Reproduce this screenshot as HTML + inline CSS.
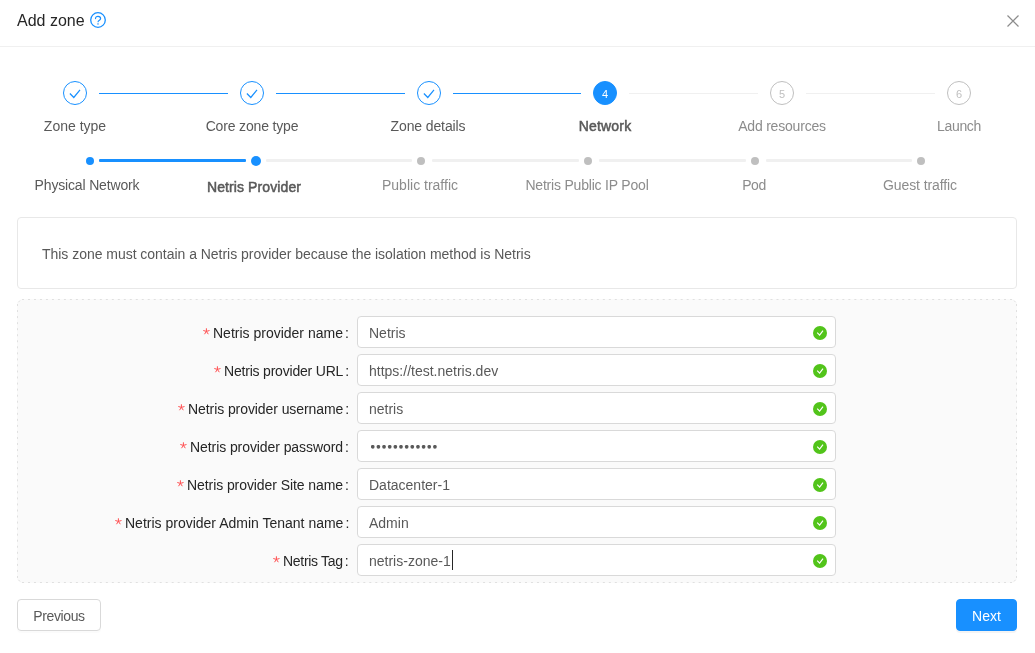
<!DOCTYPE html>
<html>
<head>
<meta charset="utf-8">
<style>
html,body{margin:0;padding:0;width:1035px;height:653px;overflow:hidden;background:#fff;}
body{font-family:"Liberation Sans",sans-serif;font-size:14px;color:#262626;position:relative;}
.a{position:absolute;white-space:nowrap;will-change:transform;}
.title{left:17px;top:10px;font-size:16px;line-height:22px;color:#262626;}
.hdr-line{left:0;top:46px;width:1035px;height:1px;background:#f0f0f0;}
.circ{width:22px;height:22px;border-radius:50%;border:1px solid #1890ff;top:81px;}
.circ.wait{border-color:#bfbfbf;color:#bfbfbf;font-size:11px;line-height:24px;text-align:center;}
.circ.proc{background:#1890ff;color:#fff;font-size:11px;line-height:24px;text-align:center;}
.tail{top:93px;height:1px;background:#1890ff;}
.tail.wait{background:#f0f0f0;}
.st{top:116px;line-height:20px;width:200px;text-align:center;color:#595959;}
.st.wait{color:#8c8c8c;}
.st.proc{color:#595959;font-weight:normal;-webkit-text-stroke:0.5px #595959;letter-spacing:0.2px;}
.dot{width:8px;height:8px;border-radius:50%;background:#1890ff;top:157px;}
.dot.wait{background:#bfbfbf;}
.dot.big{width:10px;height:10px;top:156px;}
.dtail{top:159px;height:3px;background:#1890ff;border-radius:1px;}
.dtail.wait{background:#f0f0f0;}
.sst{top:175px;line-height:20px;width:200px;text-align:center;color:#595959;}
.sst.wait{color:#8c8c8c;}
.sst.proc{font-weight:normal;-webkit-text-stroke:0.5px #595959;top:177px;letter-spacing:0.1px;}
.info{left:17px;top:217px;width:998px;height:70px;border:1px solid #e8e8e8;border-radius:4px;}
.infotext{left:42px;top:244px;line-height:20px;color:#595959;letter-spacing:-0.03px;}
.form{left:17px;top:299px;width:1000px;height:284px;border-radius:6px;background:#fafafa;}
.lbl{right:686px;line-height:20px;color:#262626;}
.lbl .ast{vertical-align:3.2px;margin-right:3px;margin-left:1px;}
.lbl b{font-weight:normal;margin-left:2px;}
.inp{left:357px;width:477px;height:30px;border:1px solid #d9d9d9;border-radius:4px;background:#fff;}
.inp span{position:absolute;left:11px;top:6px;line-height:20px;color:#595959;}
.ok{position:absolute;left:455px;top:9px;width:14px;height:14px;}
.btn{top:599px;height:30px;border:1px solid #d9d9d9;border-radius:4px;background:#fff;color:#595959;text-align:center;line-height:32px;box-shadow:0 2px 0 rgba(0,0,0,.015);}
.btn.primary{background:#1890ff;border-color:#1890ff;color:#fff;box-shadow:0 2px 0 rgba(0,0,0,.045);}
</style>
</head>
<body>
<div class="a title">Add zone</div>
<svg class="a" style="left:90px;top:12px" width="16" height="16" viewBox="0 0 16 16"><circle cx="8" cy="8" r="7.3" fill="none" stroke="#1890ff" stroke-width="1.3"/><path d="M5.5 6.6c0-1.4 1.1-2.3 2.5-2.3s2.6 1 2.6 2.2c0 .9-.6 1.3-1.2 1.7-.7.4-1.3.9-1.3 1.5" fill="none" stroke="#1890ff" stroke-width="1.2" stroke-linecap="round"/><rect x="7.35" y="11.3" width="1.3" height="1.3" fill="#1890ff"/></svg>
<svg class="a" style="left:1007px;top:15px" width="12" height="12" viewBox="0 0 12 12"><path d="M0.5 0.5L11.5 11.5M11.5 0.5L0.5 11.5" stroke="#8c8c8c" stroke-width="1.2"/></svg>
<div class="a hdr-line"></div>

<!-- main steps -->
<div class="a circ" style="left:63px"><svg style="position:absolute;left:-1px;top:-1px" width="24" height="24" viewBox="0 0 24 24"><path d="M6.9 12.5L10.8 16.5L17 8.9" fill="none" stroke="#1890ff" stroke-width="1.2"/></svg></div>
<div class="a tail" style="left:99px;width:129px"></div>
<div class="a circ" style="left:240px"><svg style="position:absolute;left:-1px;top:-1px" width="24" height="24" viewBox="0 0 24 24"><path d="M6.9 12.5L10.8 16.5L17 8.9" fill="none" stroke="#1890ff" stroke-width="1.2"/></svg></div>
<div class="a tail" style="left:276px;width:129px"></div>
<div class="a circ" style="left:417px"><svg style="position:absolute;left:-1px;top:-1px" width="24" height="24" viewBox="0 0 24 24"><path d="M6.9 12.5L10.8 16.5L17 8.9" fill="none" stroke="#1890ff" stroke-width="1.2"/></svg></div>
<div class="a tail" style="left:453px;width:128px"></div>
<div class="a circ proc" style="left:593px">4</div>
<div class="a tail wait" style="left:629px;width:129px"></div>
<div class="a circ wait" style="left:770px">5</div>
<div class="a tail wait" style="left:806px;width:129px"></div>
<div class="a circ wait" style="left:947px">6</div>

<div class="a st" style="left:-25px">Zone type</div>
<div class="a st" style="left:152px;letter-spacing:-0.16px">Core zone type</div>
<div class="a st" style="left:328px;letter-spacing:-0.12px">Zone details</div>
<div class="a st proc" style="left:505px">Network</div>
<div class="a st wait" style="left:682px;letter-spacing:-0.2px">Add resources</div>
<div class="a st wait" style="left:859px;letter-spacing:-0.35px">Launch</div>

<!-- sub steps -->
<div class="a dot" style="left:86px"></div>
<div class="a dtail" style="left:99px;width:147px"></div>
<div class="a dot big" style="left:251px"></div>
<div class="a dtail wait" style="left:266px;width:146px"></div>
<div class="a dot wait" style="left:417px"></div>
<div class="a dtail wait" style="left:432px;width:147px"></div>
<div class="a dot wait" style="left:584px"></div>
<div class="a dtail wait" style="left:599px;width:147px"></div>
<div class="a dot wait" style="left:751px"></div>
<div class="a dtail wait" style="left:766px;width:146px"></div>
<div class="a dot wait" style="left:917px"></div>

<div class="a sst" style="left:-13px;letter-spacing:-0.16px">Physical Network</div>
<div class="a sst proc" style="left:154px">Netris Provider</div>
<div class="a sst wait" style="left:320px">Public traffic</div>
<div class="a sst wait" style="left:487px;letter-spacing:-0.2px">Netris Public IP Pool</div>
<div class="a sst wait" style="left:654px;letter-spacing:-0.5px">Pod</div>
<div class="a sst wait" style="left:820px;letter-spacing:-0.1px">Guest traffic</div>

<div class="a info"></div>
<div class="a infotext">This zone must contain a Netris provider because the isolation method is Netris</div>

<div class="a form"></div>
<svg class="a" style="left:0;top:0" width="1035" height="653" viewBox="0 0 1035 653">
<g fill="none" stroke="#e0e0e0" stroke-width="1">
<line x1="22" y1="299.5" x2="1012" y2="299.5" stroke-dasharray="2 3.988"/>
<line x1="22" y1="582.5" x2="1012" y2="582.5" stroke-dasharray="2 3.988"/>
<line x1="17.5" y1="304" x2="17.5" y2="578" stroke-dasharray="2 4.044"/>
<line x1="1016.5" y1="304" x2="1016.5" y2="578" stroke-dasharray="2 4.044"/>
<path d="M18.3 302.3L20 300.6M18.3 579.7L20 581.4M1015.7 302.3L1014 300.6M1015.7 579.7L1014 581.4"/>
</g></svg>
<div class="a lbl" style="top:323px"><svg class="ast" width="7" height="7" viewBox="0 0 7 7"><path d="M3.4 3.4V0.3M3.4 3.4L0.3 2.5M3.4 3.4L6.5 2.5M3.4 3.4L1.5 6.2M3.4 3.4L5.3 6.2" fill="none" stroke="#ff4d4f" stroke-width="1"/></svg>Netris provider name<b>:</b></div>
<div class="a inp" style="top:316px"><span>Netris</span><svg class="ok" viewBox="0 0 14 14"><circle cx="7" cy="7" r="7" fill="#52c41a"/><path d="M4.2 6.7L6.6 9.1L10 4.6" fill="none" stroke="#fff" stroke-width="1.15"/></svg></div>
<div class="a lbl" style="top:361px"><svg class="ast" width="7" height="7" viewBox="0 0 7 7"><path d="M3.4 3.4V0.3M3.4 3.4L0.3 2.5M3.4 3.4L6.5 2.5M3.4 3.4L1.5 6.2M3.4 3.4L5.3 6.2" fill="none" stroke="#ff4d4f" stroke-width="1"/></svg><span style="letter-spacing:-0.2px">Netris provider URL</span><b>:</b></div>
<div class="a inp" style="top:354px"><span>https://test.netris.dev</span><svg class="ok" viewBox="0 0 14 14"><circle cx="7" cy="7" r="7" fill="#52c41a"/><path d="M4.2 6.7L6.6 9.1L10 4.6" fill="none" stroke="#fff" stroke-width="1.15"/></svg></div>
<div class="a lbl" style="top:399px"><svg class="ast" width="7" height="7" viewBox="0 0 7 7"><path d="M3.4 3.4V0.3M3.4 3.4L0.3 2.5M3.4 3.4L6.5 2.5M3.4 3.4L1.5 6.2M3.4 3.4L5.3 6.2" fill="none" stroke="#ff4d4f" stroke-width="1"/></svg><span style="letter-spacing:-0.08px">Netris provider username</span><b>:</b></div>
<div class="a inp" style="top:392px"><span>netris</span><svg class="ok" viewBox="0 0 14 14"><circle cx="7" cy="7" r="7" fill="#52c41a"/><path d="M4.2 6.7L6.6 9.1L10 4.6" fill="none" stroke="#fff" stroke-width="1.15"/></svg></div>
<div class="a lbl" style="top:437px"><svg class="ast" width="7" height="7" viewBox="0 0 7 7"><path d="M3.4 3.4V0.3M3.4 3.4L0.3 2.5M3.4 3.4L6.5 2.5M3.4 3.4L1.5 6.2M3.4 3.4L5.3 6.2" fill="none" stroke="#ff4d4f" stroke-width="1"/></svg><span style="letter-spacing:-0.08px">Netris provider password</span><b>:</b></div>
<div class="a inp" style="top:430px"><svg style="position:absolute;left:12.6px;top:14.1px" width="70" height="4"><circle cx="1.75" cy="1.8" r="1.85" fill="#595959"/><circle cx="7.40" cy="1.8" r="1.85" fill="#595959"/><circle cx="13.05" cy="1.8" r="1.85" fill="#595959"/><circle cx="18.70" cy="1.8" r="1.85" fill="#595959"/><circle cx="24.35" cy="1.8" r="1.85" fill="#595959"/><circle cx="30.00" cy="1.8" r="1.85" fill="#595959"/><circle cx="35.65" cy="1.8" r="1.85" fill="#595959"/><circle cx="41.30" cy="1.8" r="1.85" fill="#595959"/><circle cx="46.95" cy="1.8" r="1.85" fill="#595959"/><circle cx="52.60" cy="1.8" r="1.85" fill="#595959"/><circle cx="58.25" cy="1.8" r="1.85" fill="#595959"/><circle cx="63.90" cy="1.8" r="1.85" fill="#595959"/></svg><svg class="ok" viewBox="0 0 14 14"><circle cx="7" cy="7" r="7" fill="#52c41a"/><path d="M4.2 6.7L6.6 9.1L10 4.6" fill="none" stroke="#fff" stroke-width="1.15"/></svg></div>
<div class="a lbl" style="top:475px"><svg class="ast" width="7" height="7" viewBox="0 0 7 7"><path d="M3.4 3.4V0.3M3.4 3.4L0.3 2.5M3.4 3.4L6.5 2.5M3.4 3.4L1.5 6.2M3.4 3.4L5.3 6.2" fill="none" stroke="#ff4d4f" stroke-width="1"/></svg><span style="letter-spacing:-0.08px">Netris provider Site name</span><b>:</b></div>
<div class="a inp" style="top:468px"><span>Datacenter-1</span><svg class="ok" viewBox="0 0 14 14"><circle cx="7" cy="7" r="7" fill="#52c41a"/><path d="M4.2 6.7L6.6 9.1L10 4.6" fill="none" stroke="#fff" stroke-width="1.15"/></svg></div>
<div class="a lbl" style="top:513px"><svg class="ast" width="7" height="7" viewBox="0 0 7 7"><path d="M3.4 3.4V0.3M3.4 3.4L0.3 2.5M3.4 3.4L6.5 2.5M3.4 3.4L1.5 6.2M3.4 3.4L5.3 6.2" fill="none" stroke="#ff4d4f" stroke-width="1"/></svg>Netris provider Admin Tenant name<b>:</b></div>
<div class="a inp" style="top:506px"><span>Admin</span><svg class="ok" viewBox="0 0 14 14"><circle cx="7" cy="7" r="7" fill="#52c41a"/><path d="M4.2 6.7L6.6 9.1L10 4.6" fill="none" stroke="#fff" stroke-width="1.15"/></svg></div>
<div class="a lbl" style="top:551px"><svg class="ast" width="7" height="7" viewBox="0 0 7 7"><path d="M3.4 3.4V0.3M3.4 3.4L0.3 2.5M3.4 3.4L6.5 2.5M3.4 3.4L1.5 6.2M3.4 3.4L5.3 6.2" fill="none" stroke="#ff4d4f" stroke-width="1"/></svg><span style="letter-spacing:-0.3px">Netris Tag</span><b>:</b></div>
<div class="a inp" style="top:544px"><span>netris-zone-1</span><div style="position:absolute;left:94px;top:5px;width:1px;height:20px;background:#262626"></div><svg class="ok" viewBox="0 0 14 14"><circle cx="7" cy="7" r="7" fill="#52c41a"/><path d="M4.2 6.7L6.6 9.1L10 4.6" fill="none" stroke="#fff" stroke-width="1.15"/></svg></div>

<div class="a btn" style="left:17px;width:82px;letter-spacing:-0.4px">Previous</div>
<div class="a btn primary" style="left:956px;width:59px">Next</div>
</body>
</html>
